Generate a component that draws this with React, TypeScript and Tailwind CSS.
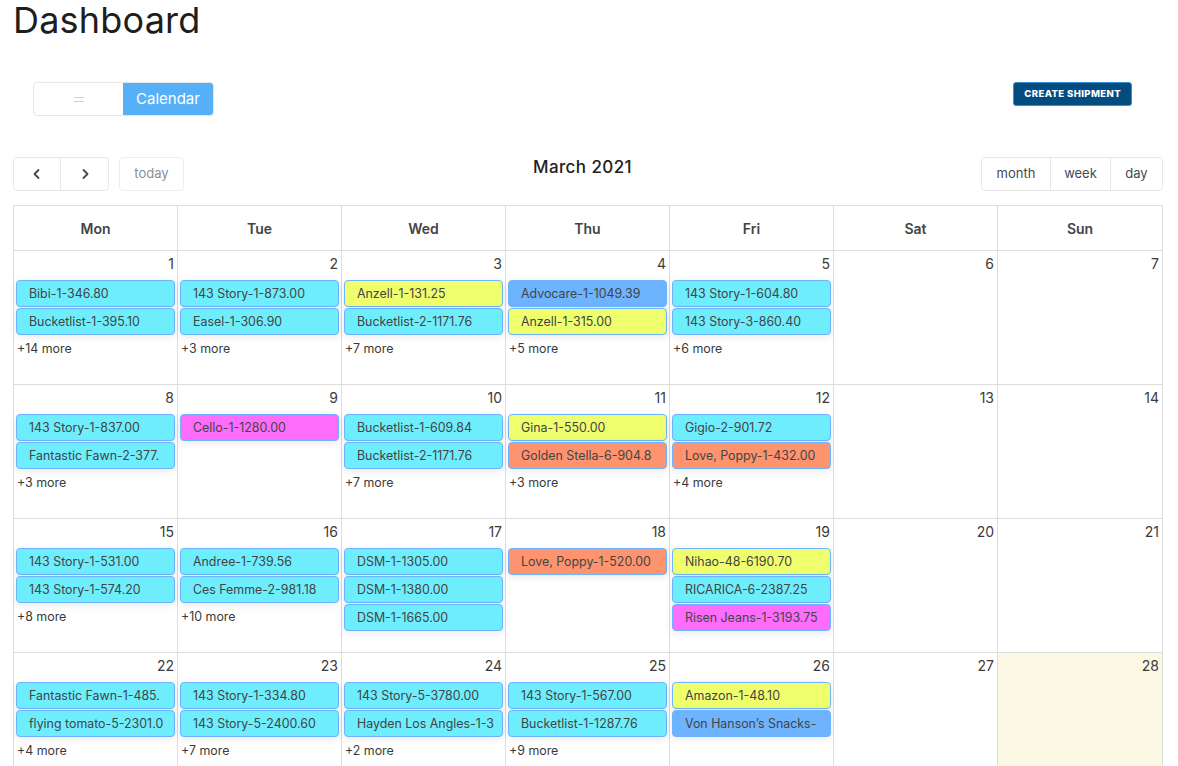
import React from 'react';

type Ev = { t: string; c: 'c' | 'y' | 'b' | 'm' | 'o' };
type Day = { n: number; ev: Ev[]; more?: number; today?: boolean };

const colors: Record<Ev['c'], string> = {
    c: 'bg-[#6eeefd]',
    y: 'bg-[#effe6d]',
    b: 'bg-[#6db3fd]',
    m: 'bg-[#fe6cfc]',
    o: 'bg-[#fd946f]',
};

// long titles are cut where the calendar cuts them
const weeks: Day[][] = [
    [
        { n: 1, ev: [{ t: 'Bibi-1-346.80', c: 'c' }, { t: 'Bucketlist-1-395.10', c: 'c' }], more: 14 },
        { n: 2, ev: [{ t: '143 Story-1-873.00', c: 'c' }, { t: 'Easel-1-306.90', c: 'c' }], more: 3 },
        { n: 3, ev: [{ t: 'Anzell-1-131.25', c: 'y' }, { t: 'Bucketlist-2-1171.76', c: 'c' }], more: 7 },
        { n: 4, ev: [{ t: 'Advocare-1-1049.39', c: 'b' }, { t: 'Anzell-1-315.00', c: 'y' }], more: 5 },
        { n: 5, ev: [{ t: '143 Story-1-604.80', c: 'c' }, { t: '143 Story-3-860.40', c: 'c' }], more: 6 },
        { n: 6, ev: [] },
        { n: 7, ev: [] },
    ],
    [
        { n: 8, ev: [{ t: '143 Story-1-837.00', c: 'c' }, { t: 'Fantastic Fawn-2-377.', c: 'c' }], more: 3 },
        { n: 9, ev: [{ t: 'Cello-1-1280.00', c: 'm' }] },
        { n: 10, ev: [{ t: 'Bucketlist-1-609.84', c: 'c' }, { t: 'Bucketlist-2-1171.76', c: 'c' }], more: 7 },
        { n: 11, ev: [{ t: 'Gina-1-550.00', c: 'y' }, { t: 'Golden Stella-6-904.8', c: 'o' }], more: 3 },
        { n: 12, ev: [{ t: 'Gigio-2-901.72', c: 'c' }, { t: 'Love, Poppy-1-432.00', c: 'o' }], more: 4 },
        { n: 13, ev: [] },
        { n: 14, ev: [] },
    ],
    [
        { n: 15, ev: [{ t: '143 Story-1-531.00', c: 'c' }, { t: '143 Story-1-574.20', c: 'c' }], more: 8 },
        { n: 16, ev: [{ t: 'Andree-1-739.56', c: 'c' }, { t: 'Ces Femme-2-981.18', c: 'c' }], more: 10 },
        { n: 17, ev: [{ t: 'DSM-1-1305.00', c: 'c' }, { t: 'DSM-1-1380.00', c: 'c' }, { t: 'DSM-1-1665.00', c: 'c' }] },
        { n: 18, ev: [{ t: 'Love, Poppy-1-520.00', c: 'o' }] },
        { n: 19, ev: [{ t: 'Nihao-48-6190.70', c: 'y' }, { t: 'RICARICA-6-2387.25', c: 'c' }, { t: 'Risen Jeans-1-3193.75', c: 'm' }] },
        { n: 20, ev: [] },
        { n: 21, ev: [] },
    ],
    [
        { n: 22, ev: [{ t: 'Fantastic Fawn-1-485.', c: 'c' }, { t: 'flying tomato-5-2301.0', c: 'c' }], more: 4 },
        { n: 23, ev: [{ t: '143 Story-1-334.80', c: 'c' }, { t: '143 Story-5-2400.60', c: 'c' }], more: 7 },
        { n: 24, ev: [{ t: '143 Story-5-3780.00', c: 'c' }, { t: 'Hayden Los Angles-1-3', c: 'c' }], more: 2 },
        { n: 25, ev: [{ t: '143 Story-1-567.00', c: 'c' }, { t: 'Bucketlist-1-1287.76', c: 'c' }], more: 9 },
        { n: 26, ev: [{ t: 'Amazon-1-48.10', c: 'y' }, { t: 'Von Hanson’s Snacks-', c: 'b' }] },
        { n: 27, ev: [] },
        { n: 28, ev: [], today: true },
    ],
];

const dayNames = ['Mon', 'Tue', 'Wed', 'Thu', 'Fri', 'Sat', 'Sun'];

const Chevron = ({ dir }: { dir: 'l' | 'r' }) => (
    <svg width="10" height="12" viewBox="0 0 10 12" fill="none">
        <path
            d={dir === 'l' ? 'M6.5 2 L2.5 6 L6.5 10' : 'M3.5 2 L7.5 6 L3.5 10'}
            stroke="#3f4a5a"
            strokeWidth="1.8"
            strokeLinecap="round"
            strokeLinejoin="round"
        />
    </svg>
);

const Cell = ({ d, last }: { d: Day; last: boolean }) => (
    <div
        className={`h-[134px] border-t border-[#dddddd] ${last ? '' : 'border-r'} ${
            d.today ? 'bg-[#fcf8e3]' : 'bg-white'
        } px-[2px]`}
    >
        <div className="text-right text-[14px] leading-[20px] text-[#3a3a3a] pr-[1px] pt-[3px] h-[29px]">{d.n}</div>
        <div className="flex flex-col gap-[1px]">
            {d.ev.map((e, i) => (
                <div
                    key={i}
                    className={`${colors[e.c]} h-[27px] rounded-[4px] border border-[#6db3fd] pl-[12px] text-[12.4px] leading-[25px] text-[#444444] whitespace-nowrap overflow-hidden shadow-[0_2px_8px_rgba(0,0,0,0.09)]`}
                >
                    {e.t}
                </div>
            ))}
        </div>
        {d.more ? <div className="text-[12.4px] leading-[18px] text-[#3a3a3a] mt-[5px] pl-[1px]">+{d.more} more</div> : null}
    </div>
);

export default function App() {
    const font = { fontFamily: 'Inter, "Noto Sans", sans-serif' };
    return (
        <div className="bg-white min-h-[766px] text-[#333333]" style={font}>
            <h1 className="text-[36px] leading-[40px] pl-[13px] text-[#1e1e1e] tracking-[0.2px]">Dashboard</h1>

            <div className="flex items-start justify-between mt-[42px] pl-[33px] pr-[46px]">
                <div className="flex h-[34px] rounded-[4px] border border-[#e6e6e6] overflow-hidden">
                    <div className="w-[89px] flex flex-col items-center justify-center gap-[3px]">
                        <div className="w-[10px] h-[1px] bg-[#cfcfcf]" />
                        <div className="w-[10px] h-[1px] bg-[#cfcfcf]" />
                    </div>
                    <div className="w-[90px] bg-[#55b0f8] text-white text-[15px] flex items-center justify-center">Calendar</div>
                </div>
                <button className="h-[24px] px-[10px] rounded-[3px] bg-[#034c80] border border-[#3b8fd6] text-white text-[9.5px] font-extrabold tracking-[0.4px]">
                    CREATE SHIPMENT
                </button>
            </div>

            <div className="w-[1150px] ml-[13px] mt-[41px]">
                <div className="flex items-center justify-between h-[34px]">
                    <div className="flex items-center gap-[10px]">
                        <div className="flex h-[34px] rounded-[4px] border border-[#e8e8e8]">
                            <div className="w-[47px] flex items-center justify-center border-r border-[#e8e8e8]">
                                <Chevron dir="l" />
                            </div>
                            <div className="w-[47px] flex items-center justify-center">
                                <Chevron dir="r" />
                            </div>
                        </div>
                        <div className="h-[34px] w-[65px] rounded-[4px] border border-[#eeeeee] text-[13px] text-[#8a8f99] flex items-center justify-center">
                            today
                        </div>
                    </div>
                    <div className="text-[17px] font-medium text-[#222222] -mt-[12px] tracking-[0.4px]">March 2021</div>
                    <div className="flex h-[34px] rounded-[4px] border border-[#e8e8e8] text-[13px] text-[#444a55]">
                        <div className="w-[69px] flex items-center justify-center border-r border-[#e8e8e8]">month</div>
                        <div className="w-[60px] flex items-center justify-center border-r border-[#e8e8e8]">week</div>
                        <div className="w-[51px] flex items-center justify-center">day</div>
                    </div>
                </div>

                <div className="mt-[14px] border-l border-r border-t border-[#dddddd]">
                    <div className="grid grid-cols-7">
                        {dayNames.map((n, i) => (
                            <div
                                key={n}
                                className={`h-[44px] flex items-center justify-center text-[14px] font-semibold text-[#444444] ${
                                    i < 6 ? 'border-r border-[#dddddd]' : ''
                                }`}
                            >
                                {n}
                            </div>
                        ))}
                    </div>
                    {weeks.map((w, wi) => (
                        <div key={wi} className="grid grid-cols-7">
                            {w.map((d, i) => (
                                <Cell key={d.n} d={d} last={i === 6} />
                            ))}
                        </div>
                    ))}
                </div>
            </div>
        </div>
    );
}
